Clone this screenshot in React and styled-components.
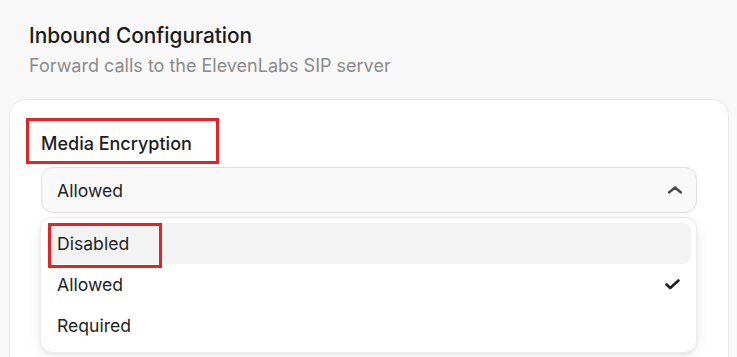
import React from "react";
import styled, { createGlobalStyle } from "styled-components";

const Global = createGlobalStyle`
  html, body { margin: 0; padding: 0; }
  body {
    background: #f8f8f8;
    font-family: Inter, "Noto Sans", "Liberation Sans", sans-serif;
    color: #1c1c1c;
    overflow: hidden;
    width: 737px;
    height: 357px;
  }
`;

const Page = styled.div`
  display: flex;
  flex-direction: column;
  padding-top: 23px;
`;

const Header = styled.header`
  display: flex;
  flex-direction: column;
  gap: 5px;
  padding: 0 29px;
`;

const Title = styled.h2`
  margin: 0;
  font-size: 20.8px;
  line-height: 26px;
  font-weight: 500;
  color: #1a1a1a;
`;

const Subtitle = styled.p`
  margin: 0;
  font-size: 18px;
  line-height: 24px;
  color: #8b8b8b;
`;

const Card = styled.section`
  margin: 21px 8px 0 9px;
  background: #fff;
  border: 1px solid #e7e7e7;
  border-radius: 16px;
  padding: 18px 31px 0 31px;
  height: 300px;
  display: flex;
  flex-direction: column;
`;

const Annotated = styled.div`
  align-self: flex-start;
  border: 3px solid #e0242a;
  margin-left: -15px;
  padding: 0 24px 0 12px;
  height: 40px;
  display: flex;
  align-items: center;
`;

const Label = styled.span`
  font-size: 18px;
  font-weight: 500;
  color: #1d1d1d;
  padding-top: 4px;
`;

const SelectWrap = styled.div`
  position: relative;
  margin-top: 3px;
`;

const Trigger = styled.button`
  width: 100%;
  height: 46px;
  box-sizing: border-box;
  border: 1px solid #e1e1e1;
  border-radius: 12px;
  background: #f9f9f9;
  display: flex;
  align-items: center;
  justify-content: space-between;
  padding: 0 14px 0 15px;
  font-family: inherit;
  font-size: 17.6px;
  color: #222;
  cursor: pointer;
`;

const Menu = styled.ul`
  position: absolute;
  top: calc(100% + 4px);
  left: -1px;
  right: 0;
  margin: 0;
  list-style: none;
  background: #fff;
  border: 1px solid #ececec;
  border-radius: 12px;
  box-shadow: 0 4px 14px rgba(0, 0, 0, 0.08), 0 1px 3px rgba(0, 0, 0, 0.06);
  padding: 5px 5px 6px 6px;
  box-sizing: border-box;
`;

const Item = styled.li`
  position: relative;
  height: 41px;
  display: flex;
  align-items: center;
  justify-content: space-between;
  padding: 0 11px 0 10px;
  border-radius: 8px;
  font-size: 17.6px;
  color: #222;
  background: ${(p) => (p.$active ? "#f3f3f3" : "transparent")};
`;

const Mark = styled.span`
  position: absolute;
  left: 1px;
  top: 0;
  width: 114px;
  height: 45px;
  box-sizing: border-box;
  border: 3px solid #e0242a;
  pointer-events: none;
`;

const Chevron = () => (
  <svg width="14" height="8" viewBox="0 0 14 8" fill="none">
    <polyline points="1,6.5 7,1.5 13,6.5" stroke="#474747" strokeWidth="2.3" strokeLinecap="round" strokeLinejoin="round" />
  </svg>
);

const Check = () => (
  <svg width="15" height="11" viewBox="0 0 15 11" fill="none">
    <polyline points="1.5,5.5 5.2,9 13.5,1.5" stroke="#1f1f1f" strokeWidth="2.6" strokeLinecap="round" strokeLinejoin="round" />
  </svg>
);

const options = [
  { label: "Disabled", active: true, marked: true },
  { label: "Allowed", selected: true },
  { label: "Required" },
];

export default function App() {
  return (
    <>
      <Global />
      <Page>
        <Header>
          <Title>Inbound Configuration</Title>
          <Subtitle>Forward calls to the ElevenLabs SIP server</Subtitle>
        </Header>
        <Card>
          <Annotated>
            <Label>Media Encryption</Label>
          </Annotated>
          <SelectWrap>
            <Trigger>
              <span>Allowed</span>
              <Chevron />
            </Trigger>
            <Menu>
              {options.map((o) => (
                <Item key={o.label} $active={o.active}>
                  <span>{o.label}</span>
                  {o.selected && <Check />}
                  {o.marked && <Mark />}
                </Item>
              ))}
            </Menu>
          </SelectWrap>
        </Card>
      </Page>
    </>
  );
}
